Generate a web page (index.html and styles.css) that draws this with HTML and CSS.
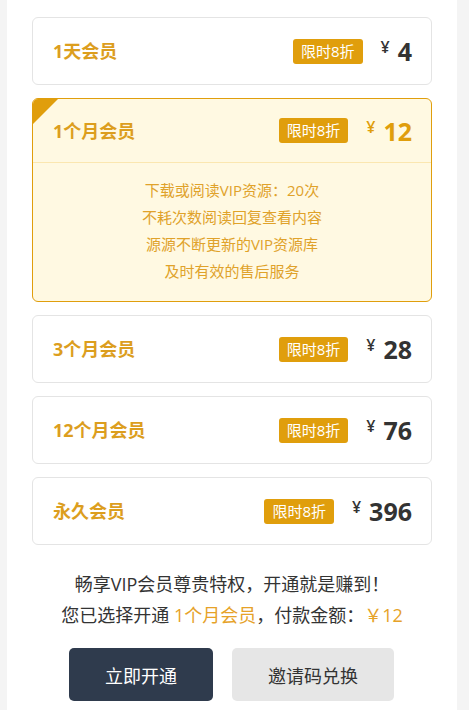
FILE: index.html
```html
<!DOCTYPE html>
<html lang="zh-CN">
<head>
<meta charset="utf-8">
<title>VIP会员</title>
<link rel="stylesheet" href="styles.css">
</head>
<body>
<div class="panel">
  <div class="plans">
    <div class="plan">
      <div class="plan-head">
        <span class="plan-name">1天会员</span>
        <span class="badge">限时8折</span>
        <span class="price"><span class="yen">¥</span><span class="num">4</span></span>
      </div>
    </div>
    <div class="plan selected">
      <span class="corner"></span>
      <div class="plan-head">
        <span class="plan-name">1个月会员</span>
        <span class="badge">限时8折</span>
        <span class="price"><span class="yen">¥</span><span class="num">12</span></span>
      </div>
      <div class="plan-body">
        <p>下载或阅读VIP资源：20次</p>
        <p>不耗次数阅读回复查看内容</p>
        <p>源源不断更新的VIP资源库</p>
        <p>及时有效的售后服务</p>
      </div>
    </div>
    <div class="plan">
      <div class="plan-head">
        <span class="plan-name">3个月会员</span>
        <span class="badge">限时8折</span>
        <span class="price"><span class="yen">¥</span><span class="num">28</span></span>
      </div>
    </div>
    <div class="plan">
      <div class="plan-head">
        <span class="plan-name">12个月会员</span>
        <span class="badge">限时8折</span>
        <span class="price"><span class="yen">¥</span><span class="num">76</span></span>
      </div>
    </div>
    <div class="plan">
      <div class="plan-head">
        <span class="plan-name">永久会员</span>
        <span class="badge">限时8折</span>
        <span class="price"><span class="yen">¥</span><span class="num">396</span></span>
      </div>
    </div>
  </div>
  <div class="summary">
    <p>畅享VIP会员尊贵特权，开通就是赚到！</p>
    <p>您已选择开通 <span class="hl">1个月会员</span>，付款金额：<span class="hl">￥12</span></p>
  </div>
  <div class="actions">
    <button class="btn btn-primary">立即开通</button>
    <button class="btn btn-secondary">邀请码兑换</button>
  </div>
</div>
</body>
</html>
```
FILE: styles.css
```css
* { box-sizing: border-box; }
html, body { margin: 0; padding: 0; }
body {
  background: #f4f4f4;
  font-family: "Open Sans", "Noto Sans CJK SC", sans-serif;
  color: #333;
}
.panel {
  background: #fff;
  margin: 0 12px 0 7px;
  padding: 17px 25px 40px;
}
.plans {
  display: flex;
  flex-direction: column;
  gap: 13px;
}
.plan {
  position: relative;
  border: 1px solid #e4e4e4;
  border-radius: 6px;
  background: #fff;
  overflow: hidden;
}
.plan-head {
  height: 66px;
  display: flex;
  align-items: center;
  padding: 0 19px 0 20px;
}
.plan-name {
  flex: 1;
  font-size: 18px;
  font-weight: 700;
  color: #dc9e1e;
  line-height: 24px;
}
.badge {
  background: #e09e0c;
  color: #fff;
  font-size: 15px;
  line-height: 25px;
  height: 25px;
  padding: 0 8px;
  border-radius: 3px;
}
.price {
  display: flex;
  align-items: flex-start;
  margin-left: 18px;
  color: #333;
}
.yen {
  font-size: 16px;
  font-weight: 600;
  line-height: 18px;
  margin-right: 8px;
  margin-top: 2px;
}
.num {
  font-size: 25px;
  font-weight: 700;
  line-height: 30px;
}
.selected {
  border-color: #e09e0c;
  background: #fff9e2;
}
.selected .plan-head { height: 63px; }
.selected .price { color: #e09e0c; }
.corner {
  position: absolute;
  left: 0;
  top: 0;
  width: 0;
  height: 0;
  border-style: solid;
  border-width: 25px 25px 0 0;
  border-color: #e09e0c transparent transparent transparent;
}
.plan-body {
  border-top: 1px solid #fbe7b0;
  padding: 14px 0 16px;
  text-align: center;
}
.plan-body p {
  margin: 0;
  font-size: 15px;
  line-height: 27px;
  color: #e0a22a;
}
.summary {
  margin-top: 24px;
  text-align: center;
}
.summary p {
  margin: 0;
  font-size: 18px;
  line-height: 31px;
  color: #333;
}
.hl { color: #e6a228; }
.actions {
  margin-top: 17px;
  display: flex;
  justify-content: center;
  gap: 19px;
  padding-right: 1px;
}
.btn {
  border: none;
  height: 53px;
  border-radius: 5px;
  font-family: "Open Sans", "Noto Sans CJK SC", sans-serif;
  font-size: 18px;
  cursor: pointer;
}
.btn-primary {
  width: 144px;
  background: #2f3b4d;
  color: #fff;
}
.btn-secondary {
  width: 162px;
  background: #e6e6e6;
  color: #333;
}
```
